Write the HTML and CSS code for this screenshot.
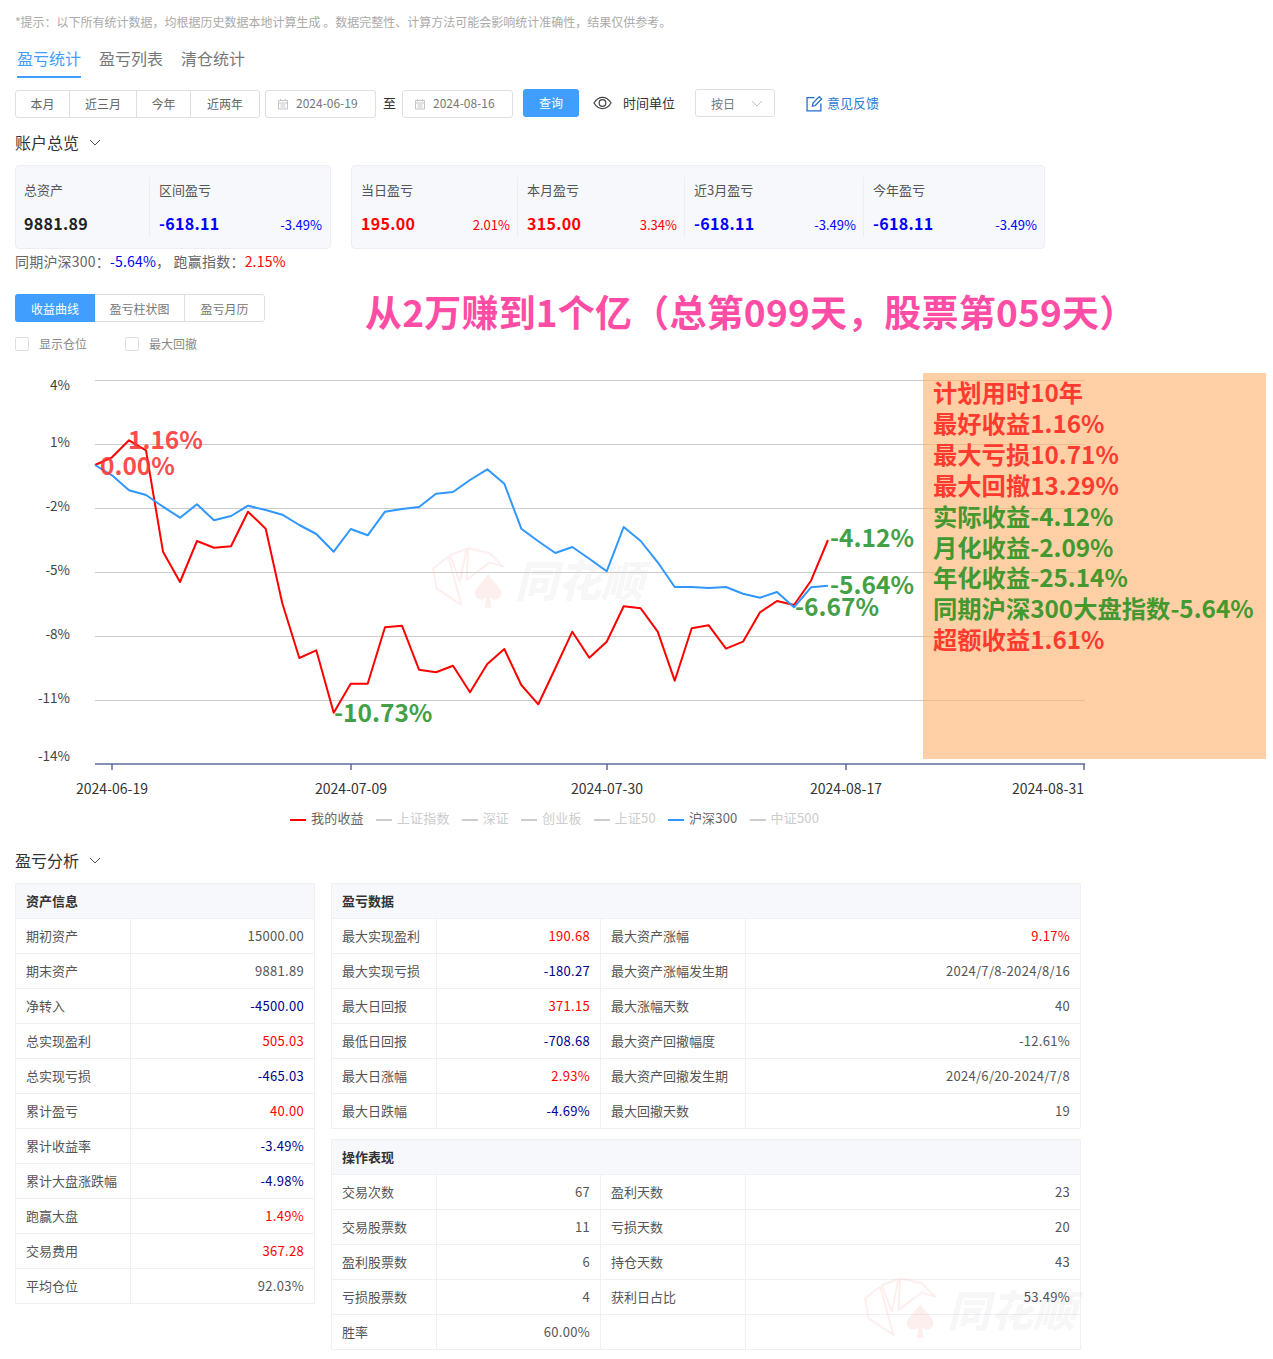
FILE: index.html
```html
<!DOCTYPE html>
<html lang="zh">
<head>
    <meta charset="UTF-8">
    <title>盈亏统计</title>
    <link rel="stylesheet" href="styles.css">
</head>
<body>
    <p class="notice">*提示：以下所有统计数据，均根据历史数据本地计算生成 。数据完整性、计算方法可能会影响统计准确性，结果仅供参考。</p>

    <!-- 顶部标签 -->
    <div class="top-tabs">
        <span class="top-tab active">盈亏统计</span>
        <span class="top-tab">盈亏列表</span>
        <span class="top-tab">清仓统计</span>
    </div>

    <!-- 工具栏 -->
    <div class="toolbar">
        <div class="range-group">
            <span class="range-btn range-a">本月</span>
            <span class="range-btn range-b">近三月</span>
            <span class="range-btn range-c">今年</span>
            <span class="range-btn range-d">近两年</span>
        </div>
        <div class="date-box">
            <svg class="cal-icon" viewBox="0 0 12 12"><path d="M1.5 2.5h9v8.5h-9zM1.5 5h9M3.5 1v2M8.5 1v2M3.5 7h5M3.5 9h5"/></svg>
            2024-06-19
        </div>
        <span class="date-sep">至</span>
        <div class="date-box">
            <svg class="cal-icon" viewBox="0 0 12 12"><path d="M1.5 2.5h9v8.5h-9zM1.5 5h9M3.5 1v2M8.5 1v2M3.5 7h5M3.5 9h5"/></svg>
            2024-08-16
        </div>
        <span class="query-btn">查询</span>
        <svg class="eye-icon" viewBox="0 0 20 14"><path d="M1 7C3.5 3 6.5 1 10 1s6.500 2 9 6c-2.500 4-5.500 6-9 6S3.500 11 1 7z"/><circle cx="10" cy="7" r="3.500"/></svg>
        <span class="unit-label">时间单位</span>
        <div class="unit-select">
            <span>按日</span>
            <svg class="chevron chevron-light" viewBox="0 0 12 7"><path d="M1 1l5 5 5-5"/></svg>
        </div>
        <svg class="edit-icon" viewBox="0 0 16 16"><path d="M8 2.500H1v12.500h13V8M6 10.500l.6-2.800L12.500 1.500l2.200 2.200-5.900 6.200z"/></svg>
        <span class="feedback">意见反馈</span>
    </div>

    <div class="block-title">
        账户总览
        <svg class="chevron" viewBox="0 0 12 7"><path d="M1 1l5 5 5-5"/></svg>
    </div>

    <!-- 账户卡片 -->
    <div class="cards">
        <div class="card card-total">
            <div class="cell">
                <div class="cell-label">总资产</div>
                <div class="cell-row"><b class="cell-num">9881.89</b></div>
            </div>
            <div class="cell">
                <div class="cell-label">区间盈亏</div>
                <div class="cell-row"><b class="cell-num down">-618.11</b><span class="down">-3.49%</span></div>
            </div>
        </div>
        <div class="card card-period">
            <div class="cell">
                <div class="cell-label">当日盈亏</div>
                <div class="cell-row"><b class="cell-num up">195.00</b><span class="up">2.01%</span></div>
            </div>
            <div class="cell">
                <div class="cell-label">本月盈亏</div>
                <div class="cell-row"><b class="cell-num up">315.00</b><span class="up">3.34%</span></div>
            </div>
            <div class="cell">
                <div class="cell-label">近3月盈亏</div>
                <div class="cell-row"><b class="cell-num down">-618.11</b><span class="down">-3.49%</span></div>
            </div>
            <div class="cell">
                <div class="cell-label">今年盈亏</div>
                <div class="cell-row"><b class="cell-num down">-618.11</b><span class="down">-3.49%</span></div>
            </div>
        </div>
    </div>
    <div class="compare">同期沪深300：<span class="down">-5.64%</span>，&nbsp;跑赢指数：<span class="up">2.15%</span></div>

    <div class="chart-tabs-row">
        <div class="chart-tabs">
            <span class="chart-tab active">收益曲线</span>
            <span class="chart-tab">盈亏柱状图</span>
            <span class="chart-tab">盈亏月历</span>
        </div>
        <div class="headline">从2万赚到1个亿（总第099天，股票第059天）</div>
    </div>

    <div class="checks">
        <label class="check"><i class="check-box"></i>显示仓位</label>
        <label class="check"><i class="check-box"></i>最大回撤</label>
    </div>

    <!-- 收益曲线 -->
    <div class="chart-wrap">
        <div class="watermark watermark-chart">
            <svg class="fan" viewBox="20 20 230 195"><path class="fan-card" d="M35 90L80 55l40 145-75-50zM85 50l50-18-20 98zM140 30l65 15 40 40-40-13-70 53z"/><path class="fan-spade" d="M200 108c-20 27-40 42-40 57 0 20 25 25 35 10l-5 33h20l-5-33c10 15 35 10 35-10 0-15-20-30-40-57z"/></svg>
            <span class="wm-text">同花顺</span>
        </div>
        <svg class="chart" width="1085" height="440" viewBox="15 365 1085 440">
            <g class="grid">
                <path d="M95 380.500H1085M95 444.500H1085M95 508.500H1085M95 572.500H1085M95 636.500H1085M95 700.500H1085"/>
            </g>
            <path class="axis" d="M95 764H1085M112 764v6M351 764v6M607 764v6M846 764v6M1084 764v6"/>
            <g class="y-labels">
                <text x="70" y="390">4%</text>
                <text x="70" y="447">1%</text>
                <text x="70" y="511">-2%</text>
                <text x="70" y="575">-5%</text>
                <text x="70" y="639">-8%</text>
                <text x="70" y="703">-11%</text>
                <text x="70" y="761">-14%</text>
            </g>
            <g class="x-labels">
                <text x="112" y="794">2024-06-19</text>
                <text x="351" y="794">2024-07-09</text>
                <text x="607" y="794">2024-07-30</text>
                <text x="846" y="794">2024-08-17</text>
                <text x="1048" y="794">2024-08-31</text>
            </g>
            <polyline class="line-red" points="95,465 112,457.300 129,440.300 146,450.300 163,551.700 180,582 197,541 214,547.700 231,546.300 248,511.700 265.700,528.700 282.300,603.300 299.300,658 316.300,650.300 333.700,712.700 350.700,683.700 367.700,683.700 385,627.300 402,625.700 419,669.700 436,672.300 453,665.700 470,692.300 487.300,664 504.300,649 521.300,685 538.300,704.300 555.300,668.300 572.300,631.700 589.300,657.700 606.700,641.700 623.700,606.300 640.700,608.300 657.700,631.700 674.700,680.700 691.700,628.300 708.700,625.300 726,648.700 743,641.700 760,612.300 777,601 794,605 811,580.700 828,540"/>
            <polyline class="line-blue" points="95,465 112,475.300 129,490.300 146,495 163,506.700 180,517.700 197,504.300 214,520.300 231,516 248,505.700 265.700,510 282.300,514.700 299.300,525 316.300,534 333.700,551.700 350.700,529 367.700,535.300 385,511.700 402,509 419,507 436,493.700 453,492 470,480 487.300,469.300 504.300,483.700 521.300,528.700 538.300,541.300 555.300,553 572.300,547 589.300,558.700 606.700,571.300 623.700,527 640.700,541 657.700,562.300 674.700,587 691.700,587 708.700,588 726,587 743,593.700 760,597.700 777,592 794,607.300 811,587.300 828,585.700"/>
            <g class="marks">
                <text class="mark-red" x="128" y="449">1.16%</text>
                <text class="mark-red" x="100" y="475">0.00%</text>
                <text class="mark-green" x="334" y="722">-10.73%</text>
                <text class="mark-green" x="830" y="547">-4.12%</text>
                <text class="mark-green" x="830" y="594">-5.64%</text>
                <text class="mark-green" x="795" y="616">-6.67%</text>
            </g>
        </svg>
        <div class="legend">
            <span class="legend-item"><i class="legend-line red"></i>我的收益</span>
            <span class="legend-item off"><i class="legend-line"></i>上证指数</span>
            <span class="legend-item off"><i class="legend-line"></i>深证</span>
            <span class="legend-item off"><i class="legend-line"></i>创业板</span>
            <span class="legend-item off"><i class="legend-line"></i>上证50</span>
            <span class="legend-item"><i class="legend-line blue"></i>沪深300</span>
            <span class="legend-item off"><i class="legend-line"></i>中证500</span>
        </div>
        <div class="plan-box">
            <div class="plan-red">计划用时10年</div>
            <div class="plan-red">最好收益1.16%</div>
            <div class="plan-red">最大亏损10.71%</div>
            <div class="plan-red">最大回撤13.29%</div>
            <div class="plan-green">实际收益-4.12%</div>
            <div class="plan-green">月化收益-2.09%</div>
            <div class="plan-green">年化收益-25.14%</div>
            <div class="plan-green">同期沪深300大盘指数-5.64%</div>
            <div class="plan-red">超额收益1.61%</div>
        </div>
    </div>

    <div class="block-title block-analysis">
        盈亏分析
        <svg class="chevron" viewBox="0 0 12 7"><path d="M1 1l5 5 5-5"/></svg>
    </div>

    <!-- 盈亏分析表格 -->
    <div class="tables">
        <table class="stat-table table-asset">
            <colgroup><col class="col-asset-k"><col></colgroup>
            <tr><th colspan="2">资产信息</th></tr>
            <tr><td>期初资产</td><td class="val">15000.00</td></tr>
            <tr><td>期末资产</td><td class="val">9881.89</td></tr>
            <tr><td>净转入</td><td class="val navy">-4500.00</td></tr>
            <tr><td>总实现盈利</td><td class="val up">505.03</td></tr>
            <tr><td>总实现亏损</td><td class="val navy">-465.03</td></tr>
            <tr><td>累计盈亏</td><td class="val up">40.00</td></tr>
            <tr><td>累计收益率</td><td class="val navy">-3.49%</td></tr>
            <tr><td>累计大盘涨跌幅</td><td class="val navy">-4.98%</td></tr>
            <tr><td>跑赢大盘</td><td class="val up">1.49%</td></tr>
            <tr><td>交易费用</td><td class="val up">367.28</td></tr>
            <tr><td>平均仓位</td><td class="val">92.03%</td></tr>
        </table>
        <div class="table-stack">
            <table class="stat-table table-wide">
                <colgroup><col class="col-k1"><col class="col-v1"><col class="col-k2"><col></colgroup>
                <tr><th colspan="4">盈亏数据</th></tr>
                <tr><td>最大实现盈利</td><td class="val up">190.68</td><td>最大资产涨幅</td><td class="val up">9.17%</td></tr>
                <tr><td>最大实现亏损</td><td class="val navy">-180.27</td><td>最大资产涨幅发生期</td><td class="val">2024/7/8-2024/8/16</td></tr>
                <tr><td>最大日回报</td><td class="val up">371.15</td><td>最大涨幅天数</td><td class="val">40</td></tr>
                <tr><td>最低日回报</td><td class="val navy">-708.68</td><td>最大资产回撤幅度</td><td class="val">-12.61%</td></tr>
                <tr><td>最大日涨幅</td><td class="val up">2.93%</td><td>最大资产回撤发生期</td><td class="val">2024/6/20-2024/7/8</td></tr>
                <tr><td>最大日跌幅</td><td class="val navy">-4.69%</td><td>最大回撤天数</td><td class="val">19</td></tr>
            </table>
            <table class="stat-table table-wide">
                <colgroup><col class="col-k1"><col class="col-v1"><col class="col-k2"><col></colgroup>
                <tr><th colspan="4">操作表现</th></tr>
                <tr><td>交易次数</td><td class="val">67</td><td>盈利天数</td><td class="val">23</td></tr>
                <tr><td>交易股票数</td><td class="val">11</td><td>亏损天数</td><td class="val">20</td></tr>
                <tr><td>盈利股票数</td><td class="val">6</td><td>持仓天数</td><td class="val">43</td></tr>
                <tr><td>亏损股票数</td><td class="val">4</td><td>获利日占比</td><td class="val">53.49%</td></tr>
                <tr><td>胜率</td><td class="val">60.00%</td><td></td><td></td></tr>
            </table>
            <div class="watermark watermark-table">
                <svg class="fan" viewBox="20 20 230 195"><path class="fan-card" d="M35 90L80 55l40 145-75-50zM85 50l50-18-20 98zM140 30l65 15 40 40-40-13-70 53z"/><path class="fan-spade" d="M200 108c-20 27-40 42-40 57 0 20 25 25 35 10l-5 33h20l-5-33c10 15 35 10 35-10 0-15-20-30-40-57z"/></svg>
                <span class="wm-text">同花顺</span>
            </div>
        </div>
    </div>
</body>
</html>
```

FILE: styles.css
```css
html, body {
    margin: 0;
    padding: 0;
    background: #fff;
}
body {
    padding: 0 0 9px 15px;
    font-family: "Noto Sans CJK SC", "Liberation Sans", sans-serif;
    font-size: 13px;
    color: #666;
    overflow-x: hidden;
}
.up { color: #f00; }
.down { color: #00f; }
.navy { color: #00008b; }

.notice {
    margin: 0;
    padding-top: 14px;
    font-size: 12px;
    line-height: 16px;
    color: #aaa;
}
.top-tabs {
    display: flex;
    gap: 18px;
    margin: 16px 0 0 2px;
}
.top-tab {
    font-size: 16px;
    line-height: 24px;
    padding-bottom: 6px;
    border-bottom: 2px solid transparent;
    color: #777;
}
.top-tab.active {
    color: #409eff;
    border-bottom-color: #409eff;
}

/* 工具栏 */
.toolbar {
    display: flex;
    align-items: center;
    height: 28px;
    margin-top: 12px;
}
.range-group {
    display: flex;
    height: 28px;
    box-sizing: border-box;
    border: 1px solid #dcdfe6;
    border-radius: 3px;
}
.range-btn {
    display: flex;
    align-items: center;
    justify-content: center;
    padding-bottom: 2px;
    font-size: 12px;
    color: #666;
    box-sizing: border-box;
    border-right: 1px solid #dcdfe6;
}
.range-btn:last-child { border-right: 0; }
.range-a { width: 54px; }
.range-b { width: 67px; }
.range-c { width: 54px; }
.range-d { width: 68px; }
.date-box {
    display: flex;
    align-items: center;
    width: 111px;
    height: 28px;
    box-sizing: border-box;
    margin-left: 5px;
    padding: 0 0 3px 11px;
    border: 1px solid #dcdfe6;
    border-radius: 3px;
    font-size: 12px;
    color: #777;
}
.cal-icon {
    width: 12px;
    height: 12px;
    margin: 3px 7px 0 0;
    fill: none;
    stroke: #c0c4cc;
}
.date-sep {
    margin: 0 1px 3px 7px;
    width: 13px;
    color: #333;
}
.date-sep + .date-box { margin-left: 5px; }
.query-btn {
    width: 56px;
    height: 28px;
    margin: 0 0 2px 10px;
    background: #409eff;
    border-radius: 3px;
    color: #fff;
    font-size: 12px;
    line-height: 28px;
    text-align: center;
}
.eye-icon {
    width: 19px;
    height: 14px;
    margin: 0 11px 2px 14px;
    fill: none;
    stroke: #444;
    stroke-width: 1.300;
}
.unit-label { color: #333; width: 53px; margin-bottom: 3px; }
.unit-select {
    display: flex;
    align-items: center;
    justify-content: space-between;
    width: 80px;
    height: 28px;
    box-sizing: border-box;
    margin: 0 0 2px 19px;
    padding: 0 11px 0 15px;
    border: 1px solid #dcdfe6;
    border-radius: 3px;
    font-size: 12px;
    color: #777;
}
.edit-icon {
    width: 17px;
    height: 17px;
    margin: 0 4px 2px 31px;
    fill: none;
    stroke: #1e6fd0;
    stroke-width: 1.200;
}
.feedback { color: #2a7ad3; margin-bottom: 3px; }
.chevron {
    width: 12px;
    height: 7px;
    fill: none;
    stroke: #555;
    stroke-width: 1;
}
.chevron-light { stroke: #c0c4cc; }

.block-title {
    display: flex;
    align-items: center;
    gap: 10px;
    margin-top: 14px;
    padding-bottom: 2px;
    font-size: 16px;
    line-height: 20px;
    color: #333;
}

/* 卡片 */
.cards {
    display: flex;
    gap: 20px;
    margin-top: 11px;
}
.card {
    display: grid;
    align-items: center;
    height: 84px;
    box-sizing: border-box;
    background: #f7f8fc;
    border: 1px solid #eceef5;
    border-radius: 4px;
}
.card-total {
    width: 316px;
    grid-template-columns: 133px 1fr;
}
.card-period {
    width: 694px;
    grid-template-columns: 165px 167px 179px 1fr;
}
.cell {
    height: 60px;
    padding: 0 7px 0 9px;
    border-left: 1px solid #eceef5;
}
.cell:first-child { border-left: 0; }
.card-total .cell { padding-right: 8px; }
.card-total .cell:first-child { padding-left: 8px; }
.cell-label {
    margin-top: 3px;
    font-size: 13px;
    line-height: 20px;
    color: #555;
}
.cell-row {
    display: flex;
    align-items: baseline;
    justify-content: space-between;
    margin-top: 11px;
    line-height: 24px;
    font-size: 13px;
}
.cell-num {
    font-size: 16px;
    letter-spacing: .3px;
    color: #222;
}
.cell-num.up { color: #f00; }
.cell-num.down { color: #00f; }
.compare {
    margin-top: 2px;
    font-size: 14px;
    line-height: 20px;
    letter-spacing: .2px;
    color: #666;
}

.chart-tabs-row {
    display: flex;
    height: 28px;
    margin-top: 23px;
}
.chart-tabs {
    display: flex;
    width: 250px;
    box-sizing: border-box;
    border: 1px solid #dcdfe6;
    border-radius: 3px;
}
.chart-tab {
    display: flex;
    align-items: center;
    justify-content: center;
    width: 90px;
    box-sizing: border-box;
    font-size: 12px;
    color: #777;
    border-right: 1px solid #dcdfe6;
}
.chart-tab:last-child { border-right: 0; width: 79px; }
.chart-tab.active {
    width: 80px;
    margin: -1px 0 -1px -1px;
    background: #409eff;
    color: #fff;
    border-radius: 3px 0 0 3px;
    border-right: 0;
}
.headline {
    margin-left: 100px;
    font-size: 37px;
    font-weight: 700;
    line-height: 34px;
    letter-spacing: .2px;
    color: #ff4da6;
    white-space: nowrap;
}
.checks {
    display: flex;
    gap: 38px;
    margin-top: 14px;
}
.check {
    display: flex;
    align-items: center;
    gap: 10px;
    font-size: 12px;
    line-height: 16px;
    color: #888;
}
.check-box {
    width: 14px;
    height: 14px;
    box-sizing: border-box;
    border: 1px solid #dcdfe6;
    border-radius: 2px;
}

/* 图表 */
.chart-wrap {
    position: relative;
    margin-top: 13px;
}
.chart {
    position: relative;
    display: block;
}
.grid path { fill: none; stroke: #ccc; stroke-width: 1; }
.axis { fill: none; stroke: #5d6c9e; stroke-width: 1.500; }
.y-labels text { font-size: 13.500px; fill: #444; text-anchor: end; }
.x-labels text { font-size: 14px; fill: #333; text-anchor: middle; }
.line-red, .line-blue { fill: none; stroke-width: 2; stroke-linejoin: round; }
.line-red { stroke: #f00; }
.line-blue { stroke: #2f97ff; }
.marks text { font-size: 24.500px; font-weight: 700; }
.mark-red { fill: #ff3333; fill-opacity: .9; }
.mark-green { fill: #43a047; }
.legend {
    display: flex;
    gap: 12px;
    margin: 5px 0 0 275px;
    font-size: 13px;
    line-height: 16px;
    letter-spacing: .2px;
}
.legend-item {
    display: flex;
    align-items: center;
    gap: 5px;
    color: #666;
}
.legend-item.off { color: #ccc; }
.legend-line {
    width: 16px;
    height: 2px;
    margin-top: 3px;
    background: #ccc;
}
.legend-line.red { background: #f00; }
.legend-line.blue { background: #2f97ff; }
.plan-box {
    position: absolute;
    left: 908px;
    top: 8px;
    width: 343px;
    height: 386px;
    box-sizing: border-box;
    padding: 4px 0 0 10px;
    background: rgba(255, 177, 107, .6);
    font-size: 24.300px;
    font-weight: 700;
    line-height: 30.900px;
    white-space: nowrap;
}
.plan-red { color: #ff3b30; }
.plan-green { color: #43982f; }

/* 水印 */
.watermark {
    position: absolute;
    display: flex;
    align-items: center;
    gap: 10px;
    pointer-events: none;
}
.watermark-chart { left: 413px; top: 180px; }
.watermark-table { right: 5px; bottom: 10px; }
.fan { width: 77px; height: 65px; }
.fan-card { fill: none; stroke: rgba(230, 80, 60, .09); stroke-width: 6; stroke-linejoin: round; }
.fan-spade { fill: rgba(230, 80, 60, .09); }
.wm-text {
    font-size: 43px;
    font-weight: 900;
    font-style: italic;
    line-height: 48px;
    color: rgba(0, 0, 0, .05);
}

/* 表格 */
.block-analysis { margin-top: 24px; }
.tables {
    display: flex;
    align-items: flex-start;
    gap: 16px;
    margin-top: 11px;
}
.table-stack {
    position: relative;
    display: flex;
    flex-direction: column;
    gap: 10px;
    width: 750px;
}
.stat-table {
    position: relative;
    border-collapse: collapse;
    table-layout: fixed;
    font-size: 13px;
    color: #555;
}
.table-asset { width: 300px; }
.table-wide { width: 750px; }
.col-asset-k { width: 115px; }
.col-k1 { width: 105px; }
.col-v1 { width: 164px; }
.col-k2 { width: 145px; }
.stat-table th, .stat-table td {
    height: 35px;
    box-sizing: border-box;
    padding: 0 10px 2px;
    border: 1px solid #eef0f6;
    white-space: nowrap;
}
.stat-table th {
    background: #f7f8fc;
    color: #333;
    font-weight: 700;
    text-align: left;
}
.stat-table .val {
    text-align: right;
    letter-spacing: .3px;
}
```
